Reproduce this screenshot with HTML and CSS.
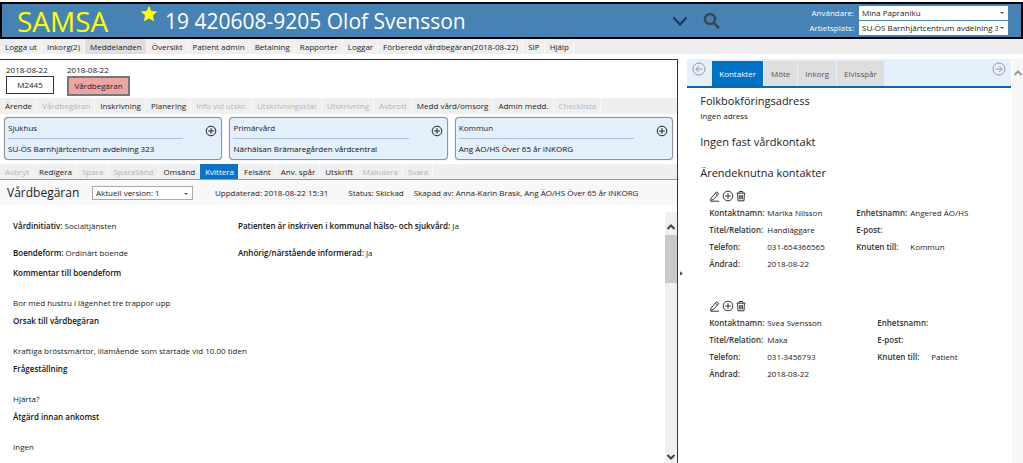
FILE: index.html
```html
<!DOCTYPE html>
<html lang="sv">
<head>
<meta charset="utf-8">
<title>SAMSA</title>
<link rel="stylesheet" href="styles.css">
</head>
<body>
<svg class="defs" aria-hidden="true">
  <symbol id="plus" viewBox="0 0 12 12"><circle cx="6" cy="6" r="4.8"/><path d="M6 3.2v5.6M3.2 6h5.6"/></symbol>
  <symbol id="pencil" viewBox="0 0 12 12"><path d="M2 8.2 7.6 1.8 9.7 3.6 4.2 9.6 1.6 10.4zM6.4 3.2 8.5 5M1.5 11.2H10"/></symbol>
  <symbol id="trash" viewBox="0 0 12 12"><path d="M1.5 3.2h9M4.2 3V1.5h3.6V3M2.6 3.4l.4 7.4h6l.4-7.4M4.7 5v4.3M6 5v4.3M7.3 5v4.3"/></symbol>
  <symbol id="up" viewBox="0 0 12 12"><path d="M2.5 8 6 4.5 9.5 8"/></symbol>
</svg>
<header class="top">
  <div class="logo">SAMSA</div>
  <svg class="star" viewBox="0 0 18 18"><path d="M9 .8 11.4 6l5.8.6-4.3 3.9 1.2 5.8L9 13.4l-5.1 2.9 1.2-5.8L.8 6.600 6.600 6z"/></svg>
  <h1 class="patient">19 420608-9205 Olof Svensson</h1>
  <div class="tools">
    <button class="bare" aria-label="Visa mer"><svg class="caret" viewBox="0 0 16 16"><path d="M1.500 4.500 8 11.500 14.500 4.500"/></svg></button>
    <button class="bare" aria-label="Sök"><svg class="search" viewBox="0 0 18 18"><circle cx="7" cy="7" r="5"/><path d="M10.800 10.800 16 16"/></svg></button>
  </div>
  <div class="login">
    <label for="user">Användare:</label>
    <div class="pick"><select id="user"><option>Mina Papraniku</option></select></div>
    <label for="place">Arbetsplats:</label>
    <div class="pick"><select id="place"><option>SU-ÖS Barnhjärtcentrum avdelning 323</option></select></div>
  </div>
</header>
<nav class="bar main-nav">
  <button>Logga ut</button><button>Inkorg(2)</button><button class="on">Meddelanden</button><button>Översikt</button><button>Patient admin</button><button>Betalning</button><button>Rapporter</button><button>Loggar</button><button>Förberedd vårdbegäran(2018-08-22)</button><button>SIP</button><button>Hjälp</button>
</nav>
<main class="work">
  <section class="case">
    <div class="steps">
      <div class="step"><span>2018-08-22</span><button class="box">M2445</button></div>
      <div class="step"><span>2018-08-22</span><button class="box current">Vårdbegäran</button></div>
    </div>
    <nav class="bar sub-nav">
      <button>Ärende</button><button disabled>Vårdbegäran</button><button>Inskrivning</button><button>Planering</button><button disabled>Info vid utskr.</button><button disabled>Utskrivningsklar</button><button disabled>Utskrivning</button><button disabled>Avbrott</button><button>Medd vård/omsorg</button><button>Admin medd.</button><button disabled>Checklista</button>
    </nav>
    <div class="units">
      <article class="unit"><h2>Sjukhus</h2><button class="bare" aria-label="Lägg till sjukhus"><svg class="icon"><use href="#plus"/></svg></button><p>SU-ÖS Barnhjärtcentrum avdelning 323</p></article>
      <article class="unit"><h2>Primärvård</h2><button class="bare" aria-label="Lägg till primärvård"><svg class="icon"><use href="#plus"/></svg></button><p>Närhälsan Brämaregården vårdcentral</p></article>
      <article class="unit"><h2>Kommun</h2><button class="bare" aria-label="Lägg till kommun"><svg class="icon"><use href="#plus"/></svg></button><p>Ang ÄO/HS Över 65 år INKORG</p></article>
    </div>
    <nav class="bar actions">
      <button disabled>Avbryt</button><button>Redigera</button><button disabled>Spara</button><button disabled>SparaSänd</button><button>Omsänd</button><button class="primary">Kvittera</button><button>Felsänt</button><button>Anv. spår</button><button>Utskrift</button><button disabled>Makulera</button><button disabled>Svara</button>
    </nav>
    <div class="doc-head">
      <h2>Vårdbegäran</h2>
      <div class="pick version"><select aria-label="Version"><option>Aktuell version: 1</option></select></div>
      <span class="updated">Uppdaterad: 2018-08-22 15:31</span><span class="status">Status: Skickad</span><span>Skapad av: Anna-Karin Brask, Ang ÄO/HS Över 65 år INKORG</span>
    </div>
    <div class="doc">
      <div class="doc-text">
        <div class="facts">
          <p><b>Vårdinitiativ:</b> Socialtjänsten</p><p><b>Patienten är inskriven i kommunal hälso- och sjukvård:</b> Ja</p>
          <p><b>Boendeform:</b> Ordinärt boende</p><p><b>Anhörig/närstående informerad:</b> Ja</p>
        </div>
        <h3>Kommentar till boendeform</h3><p>Bor med hustru i lägenhet tre trappor upp</p>
        <h3>Orsak till vårdbegäran</h3><p>Kraftiga bröstsmärtor, illamående som startade vid 10.00 tiden</p>
        <h3>Frågeställning</h3><p>Hjärta?</p>
        <h3>Åtgärd innan ankomst</h3><p>Ingen</p>
      </div>
      <div class="scroll"><svg class="arrow"><use href="#up"/></svg><div class="thumb"></div><svg class="arrow down"><use href="#up"/></svg></div>
    </div>
  </section>
  <div class="split"><svg viewBox="0 0 4 6"><path d="M0 0 4 3 0 6z"/></svg></div>
  <aside class="side">
    <div class="side-main">
      <nav class="tabs">
        <button class="bare back" aria-label="Föregående"><svg viewBox="0 0 14 14"><circle cx="7" cy="7" r="6"/><path d="M10.500 7H4M6.800 4 3.800 7l3 3"/></svg></button>
        <button class="tab on">Kontakter</button><button class="tab">Möte</button><button class="tab">Inkorg</button><button class="tab">Elvisspår</button>
        <button class="bare next" aria-label="Nästa"><svg viewBox="0 0 14 14"><circle cx="7" cy="7" r="6"/><path d="M3.500 7H10M7.200 4l3 3-3 3"/></svg></button>
      </nav>
      <div class="contacts">
        <h2>Folkbokföringsadress</h2>
        <p>Ingen adress</p>
        <h2 class="fixed">Ingen fast vårdkontakt</h2>
        <h2 class="linked">Ärendeknutna kontakter</h2>
        <article class="contact">
          <div class="icons"><button class="bare" aria-label="Redigera"><svg class="icon"><use href="#pencil"/></svg></button><button class="bare" aria-label="Lägg till"><svg class="icon"><use href="#plus"/></svg></button><button class="bare" aria-label="Ta bort"><svg class="icon"><use href="#trash"/></svg></button></div>
          <div class="cols">
            <dl><dt>Kontaktnamn:</dt><dd>Marika Nilsson</dd><dt>Titel/Relation:</dt><dd>Handläggare</dd><dt>Telefon:</dt><dd>031-654366565</dd><dt>Ändrad:</dt><dd>2018-08-22</dd></dl>
            <dl class="org"><dt>Enhetsnamn:</dt><dd>Angered ÄO/HS</dd><dt>E-post:</dt><dd></dd><dt>Knuten till:</dt><dd>Kommun</dd></dl>
          </div>
        </article>
        <article class="contact wide">
          <div class="icons"><button class="bare" aria-label="Redigera"><svg class="icon"><use href="#pencil"/></svg></button><button class="bare" aria-label="Lägg till"><svg class="icon"><use href="#plus"/></svg></button><button class="bare" aria-label="Ta bort"><svg class="icon"><use href="#trash"/></svg></button></div>
          <div class="cols">
            <dl><dt>Kontaktnamn:</dt><dd>Svea Svensson</dd><dt>Titel/Relation:</dt><dd>Maka</dd><dt>Telefon:</dt><dd>031-3456793</dd><dt>Ändrad:</dt><dd>2018-08-22</dd></dl>
            <dl class="org"><dt>Enhetsnamn:</dt><dd></dd><dt>E-post:</dt><dd></dd><dt>Knuten till:</dt><dd>Patient</dd></dl>
          </div>
        </article>
      </div>
    </div>
    <div class="side-scroll"><svg class="arrow"><use href="#up"/></svg></div>
  </aside>
</main>
</body>
</html>
```
FILE: styles.css
```css
* { box-sizing: border-box; margin: 0; padding: 0; }
body {
  min-height: 100vh;
  display: flex;
  flex-direction: column;
  padding-top: 2px;
  background: #fff;
  color: #222;
  font: 8px/12px "Open Sans", "Noto Sans", sans-serif;
}
button, select { font: inherit; color: inherit; border: 0; border-radius: 0; background: none; white-space: nowrap; }
svg { display: block; fill: none; stroke: currentColor; flex: none; }
h1, h2, h3 { font-weight: 400; }
.defs { position: absolute; width: 0; height: 0; }
.icon { width: 12px; height: 12px; }
.bare { display: block; flex: none; }

.top {
  display: flex;
  align-items: center;
  height: 37px;
  border: 2px solid #000;
  background: #4682b4;
  color: #fff;
}
.logo { width: 138px; padding-left: 15px; color: #ff0; font-size: 28px; line-height: 32px; }
.star { width: 18px; height: 18px; margin-bottom: 14px; fill: #ff0; stroke: none; }
.patient { margin-left: 7px; font-size: 21px; line-height: 30px; white-space: nowrap; }
.tools { display: flex; align-items: center; gap: 15px; margin-left: auto; margin-right: 88px; }
.caret { width: 16px; height: 16px; stroke: #16365a; stroke-width: 2; }
.search { width: 18px; height: 18px; stroke: #3d454e; stroke-width: 2.500; }
.login { display: grid; grid-template-columns: auto 149px; gap: 1px 5px; margin-right: 13px; text-align: right; align-items: center; }
.pick { position: relative; }
.pick::after {
  content: "";
  position: absolute;
  right: 4px;
  top: 6px;
  border: 2px solid transparent;
  border-top-color: #555;
}
.pick select {
  display: block;
  width: 100%;
  height: 14px;
  padding: 0 10px 0 3px;
  appearance: none;
  background: #fff;
  color: #222;
  text-overflow: clip;
}

.bar { display: flex; background: #f0efef; }
.bar button { padding: 0 4px 0 5px; border-right: 1px solid #f8f8f8; line-height: 15px; }
.bar button:disabled { color: #b4b4b4; }
.main-nav .on { background: #dedede; }

.work { flex: 1; display: flex; margin-top: 5px; }
.case { flex: 0 0 66.300%; min-width: 0; display: flex; flex-direction: column; border-top: 1px solid #333; border-right: 1px solid #333; }
.steps { display: flex; gap: 13px; padding: 4px 6px 2px; }
.step { display: flex; flex-direction: column; }
.box { width: 48px; height: 18px; border: 1px solid #333; }
.box.current { width: 63px; height: 20px; border: 2px solid #777; background: #eba5a5; }
.sub-nav button { line-height: 16px; }
.units { display: grid; grid-template-columns: repeat(3, 1fr); gap: 7px; padding: 3px 4px 4px; }
.unit {
  display: grid;
  grid-template-columns: 1fr auto;
  column-gap: 22px;
  padding: 4px 4px 4px 3px;
  border: 1px solid #8a95a3;
  border-radius: 4px;
  background: #e4effc;
  box-shadow: 0 0 1px #8a95a3;
}
.unit h2 { padding-bottom: 4px; border-bottom: 1px solid #abc0d3; font-size: 8px; line-height: 12px; }
.unit p { grid-column: 1 / -1; padding-top: 3px; line-height: 13px; color: #111; font-weight: 500; white-space: nowrap; }
.unit .bare { padding-top: 1px; }
.actions { border-bottom: 1px solid #999; }
.actions .primary { background: #0e73c5; color: #fff; }
.doc-head { display: flex; align-items: center; height: 25px; padding-left: 7px; background: #f8f8f8; white-space: nowrap; }
.doc-head h2 { width: 85px; font-size: 12px; line-height: 18px; }
.version { width: 101px; margin-right: 22px; border: 1px solid #aaa; }
.version select { height: 12px; }
.updated { margin-right: 20px; }
.status { margin-right: 10px; }
.doc { flex: 1; display: flex; padding-top: 7px; }
.doc-text { flex: 1; padding: 8px 0 0 13px; }
.facts { display: grid; grid-template-columns: 225px 1fr; row-gap: 15px; margin-bottom: 8px; }
.doc-text h3, .doc-text b { color: #111; font-size: 8px; font-weight: 600; }
.doc-text h3 { margin-bottom: 18px; }
.doc-text h3 + p { margin-bottom: 6px; }
.doc-text h3 + p:last-child { margin-bottom: 0; }
.scroll { width: 12px; display: flex; flex-direction: column; background: #f0f0f0; color: #444; }
.arrow { width: 12px; height: 12px; stroke-width: 2; }
.scroll .arrow { margin-top: 9px; }
.thumb { height: 48px; margin-top: 2px; background: #c9c9c9; }
.scroll .down { margin: auto 0 0; transform: rotate(180deg); }
.split { width: 9px; display: flex; align-items: center; padding: 0 3px 0 2px; }
.split svg { width: 3px; height: 5px; margin-top: 24px; fill: #555; stroke: none; }

.side { flex: 1; min-width: 0; display: flex; gap: 1px; }
.side-main { flex: 1; }
.tabs { display: flex; align-items: flex-end; gap: 1px; height: 29px; border-bottom: 2px solid #0e68b0; background: #e5f0fc; }
.tabs .bare { align-self: flex-start; color: #999; }
.tabs svg { width: 14px; height: 14px; }
.back { padding: 3px 5px; }
.next { margin-left: auto; padding: 3px 5px; }
.tab { padding: 1px 7px 0; height: 25px; background: #dedede; color: #555; }
.tab.on { background: #0072c6; color: #fff; }
.contacts { padding: 4px 0 12px 13px; }
.contacts h2 { font-size: 11px; line-height: 18px; }
.contacts h2.fixed { margin-top: 11px; }
.contacts h2.linked { margin-top: 13px; }
.contact { padding: 8px 0 0 9px; }
.contact + .contact { padding-top: 28px; }
.icons { display: flex; gap: 1px; padding-bottom: 2px; color: #333; }
.cols { display: flex; gap: 31px; }
.wide .cols { gap: 52px; }
dl { display: grid; grid-template-columns: 58px auto; align-content: start; line-height: 17px; white-space: nowrap; }
.cols dl:first-child { width: 116px; }
.org { grid-template-columns: 54px auto; }
dt { font-weight: 600; color: #333; }
dd { min-height: 17px; }
.side-scroll { width: 11px; padding-top: 8px; background: #f7f7f7; color: #999; }
```
